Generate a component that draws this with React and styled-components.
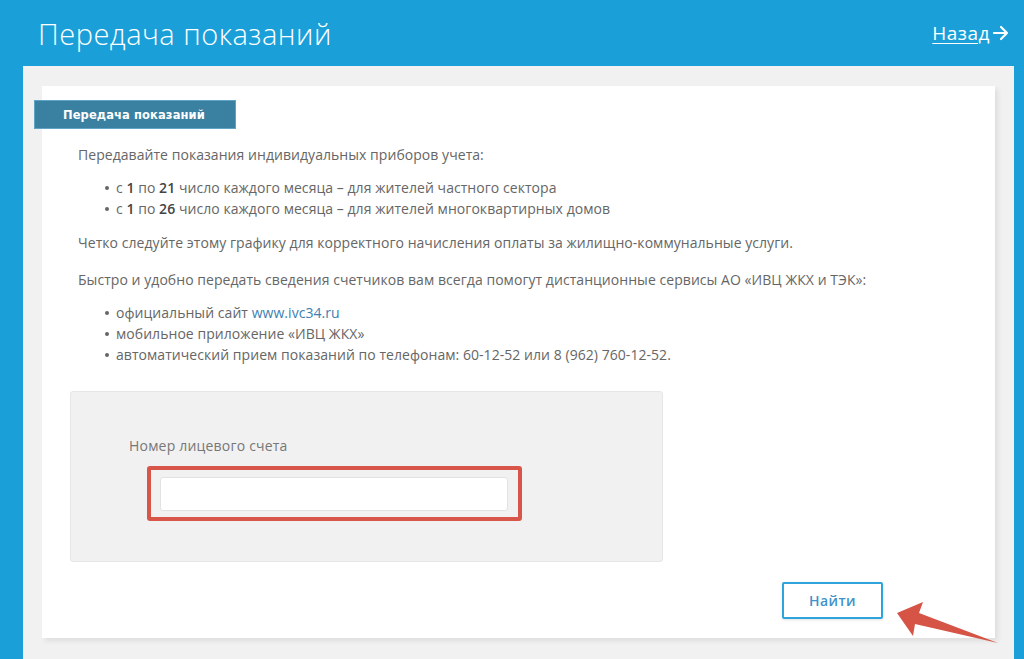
import React from "react";
import styled, { createGlobalStyle } from "styled-components";

const GlobalStyle = createGlobalStyle`
	html, body {
		margin: 0;
		padding: 0;
		height: 100%;
		overflow: hidden;
	}
	body {
		background-color: #1a9fd9;
		font-family: "Open Sans", "Liberation Sans", sans-serif;
	}
`;

const Page = styled.div`
	position: relative;
	width: 1024px;
	height: 659px;
	overflow: hidden;
`;

const Header = styled.header`
	height: 66px;
	display: flex;
	align-items: center;
	justify-content: space-between;
	padding: 0 14px 0 38px;
	box-sizing: border-box;
`;

const Title = styled.h1`
	margin: 0;
	color: #ffffff;
	font-family: "Open Sans", sans-serif;
	font-weight: 300;
	font-size: 29px;
	letter-spacing: 0.5px;
`;

const BackLink = styled.a`
	display: flex;
	align-items: center;
	gap: 2px;
	color: #ffffff;
	font-size: 19px;
	text-decoration: underline;
	text-underline-offset: 3px;
	text-decoration-thickness: 1px;
	letter-spacing: 0.5px;
	cursor: pointer;
`;

const Panel = styled.div`
	margin: 0 10px 0 23px;
	padding: 20px 19px 0;
	background-color: #f1f1f1;
	height: 600px;
	box-sizing: border-box;
`;

const Card = styled.div`
	background-color: #ffffff;
	padding: 14px 28px 19px;
	box-shadow: 3px 3px 5px rgba(0, 0, 0, 0.08);
`;

const Tab = styled.div`
	margin-left: -36px;
	width: 202px;
	height: 29px;
	box-sizing: border-box;
	background-color: #3a81a1;
	border: 1px solid #5fa4c4;
	color: #ffffff;
	font-family: "DejaVu Sans", sans-serif;
	font-weight: bold;
	font-size: 11.5px;
	display: flex;
	align-items: center;
	padding-left: 28px;
	letter-spacing: 0.1px;
`;

const Text = styled.div`
	padding: 15px 8px 0;
	color: #666666;
	font-size: 14px;
	line-height: 21px;
	letter-spacing: 0.05px;
`;

const Para = styled.p`
	margin: 0;

	& + & {
		margin-top: 16px;
	}
`;

const List = styled.ul`
	margin: 12px 0 13px;
	padding-left: 38px;
	list-style: none;

	li {
		position: relative;
	}
	li::before {
		content: "";
		position: absolute;
		left: -11px;
		top: 9px;
		width: 4px;
		height: 4px;
		border-radius: 50%;
		background-color: #666666;
	}
	b {
		color: #444444;
		font-weight: 600;
	}
`;

const Link = styled.a`
	color: #3d7fb3;
	text-decoration: none;
`;

const FormBox = styled.div`
	margin-top: 26px;
	width: 593px;
	height: 171px;
	box-sizing: border-box;
	background-color: #f1f1f1;
	border: 1px solid #e6e6e6;
	border-radius: 3px;
	padding: 44px 0 0 58px;
`;

const Label = styled.div`
	color: #777777;
	font-size: 14px;
	letter-spacing: 0.2px;
	line-height: 20px;
	margin-bottom: 10px;
`;

const Highlight = styled.div`
	margin-left: 18px;
	width: 375px;
	height: 55px;
	box-sizing: border-box;
	border: 4px solid #d8554a;
	border-radius: 3px;
	padding: 7px 10px 0 9px;
`;

const Input = styled.input`
	display: block;
	width: 100%;
	height: 34px;
	box-sizing: border-box;
	border: 1px solid #e2e2e2;
	border-radius: 3px;
	background: #ffffff;
	outline: none;
`;

const Actions = styled.div`
	display: flex;
	justify-content: flex-end;
	padding: 20px 84px 0 0;
`;

const Button = styled.button`
	width: 101px;
	height: 37px;
	background: #ffffff;
	border: 2px solid #2ea3dc;
	border-radius: 2px;
	color: #3d92c9;
	font-family: "Open Sans", sans-serif;
	font-size: 14px;
	font-weight: 600;
	letter-spacing: 0.4px;
	box-shadow: 0 1px 3px rgba(0, 0, 0, 0.12);
	cursor: pointer;
`;

const Pointer = styled.svg`
	position: absolute;
	left: 890px;
	top: 596px;
`;

const App = () => {
	return (
		<Page>
			<GlobalStyle />
			<Header>
				<Title>Передача показаний</Title>
				<BackLink>
					Назад
					<svg width="18" height="18" viewBox="0 0 18 18" fill="none" stroke="#fff" strokeWidth="2.2" strokeLinecap="round" strokeLinejoin="round">
						<path d="M2 9h13M9 3l6 6-6 6" />
					</svg>
				</BackLink>
			</Header>
			<Panel>
				<Card>
					<Tab>Передача показаний</Tab>
					<Text>
						<Para>Передавайте показания индивидуальных приборов учета:</Para>
						<List>
							<li>с <b>1</b> по <b>21</b> число каждого месяца – для жителей частного сектора</li>
							<li>с <b>1</b> по <b>26</b> число каждого месяца – для жителей многоквартирных домов</li>
						</List>
						<Para>Четко следуйте этому графику для корректного начисления оплаты за жилищно-коммунальные услуги.</Para>
						<Para>Быстро и удобно передать сведения счетчиков вам всегда помогут дистанционные сервисы АО «ИВЦ ЖКХ и ТЭК»:</Para>
						<List>
							<li>официальный сайт <Link>www.ivc34.ru</Link></li>
							<li>мобильное приложение «ИВЦ ЖКХ»</li>
							<li>автоматический прием показаний по телефонам: 60-12-52 или 8 (962) 760-12-52.</li>
						</List>
					</Text>
					<FormBox>
						<Label>Номер лицевого счета</Label>
						<Highlight>
							<Input type="text" />
						</Highlight>
					</FormBox>
					<Actions>
						<Button>Найти</Button>
					</Actions>
				</Card>
			</Panel>
			<Pointer width="120" height="60" viewBox="890 596 120 60">
				<polygon points="897,613 923,602 919,613 998,643 915,624 913,636" fill="#d55446" />
			</Pointer>
		</Page>
	);
};

export default App;
